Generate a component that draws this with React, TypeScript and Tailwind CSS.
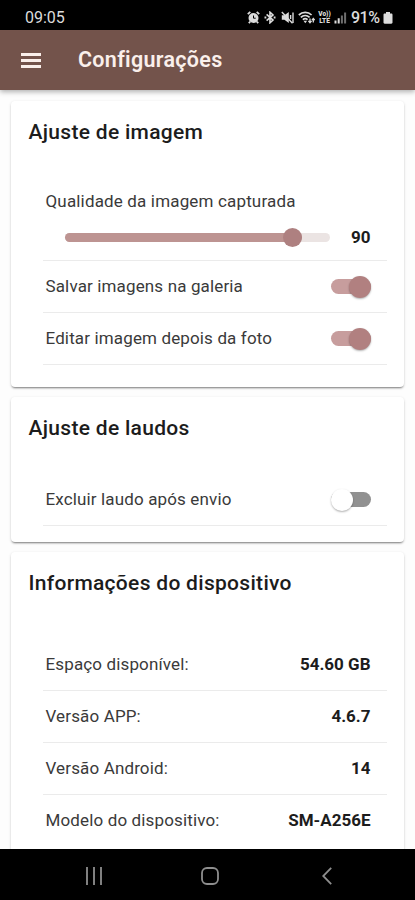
import type { ReactNode } from "react";

const DEVICE_INFO = [
  { label: "Espaço disponível:", value: "54.60 GB" },
  { label: "Versão APP:", value: "4.6.7" },
  { label: "Versão Android:", value: "14" },
  { label: "Modelo do dispositivo:", value: "SM-A256E" },
];

function StatusBar() {
  return (
    <div className="flex h-[30px] shrink-0 items-center bg-black pt-[5px] pr-[22px] pl-[25px] text-[#dcdcdc]">
      <span className="pt-px text-[16px] leading-none">09:05</span>
      <div className="ml-auto flex items-center">
        {/* alarm */}
        <svg width="13" height="13" viewBox="0 0 13 13" className="mr-[4px]" fill="none" stroke="currentColor">
          <circle cx="6.5" cy="7" r="5" fill="currentColor" stroke="none" />
          <path d="M.8 3.2 3.3 .9M12.2 3.2 9.7 .9M3.2 10.7 1.8 12.2M9.8 10.7 11.2 12.2" strokeWidth="1.8" />
          <path d="M6.5 4.5V7.2H8.7" stroke="#000" strokeWidth="1" />
        </svg>
        {/* bluetooth */}
        <svg width="12" height="13" viewBox="0 0 12 13" className="mr-[5px]" fill="none" stroke="currentColor" strokeWidth="1.6">
          <path d="M2.6 3.4 9 9.1 6 11.8V1.2L9 3.9 2.6 9.6" />
          <path d="M.5 6.5h1.8M9.7 6.5h1.8" strokeWidth="2" />
        </svg>
        {/* muted */}
        <svg width="13" height="13" viewBox="0 0 13 13" className="mr-[4px]" fill="none" stroke="currentColor">
          <path d="M.8 4.2h2.6L7.8 1v11L3.4 8.8H.8z" fill="currentColor" stroke="none" />
          <path d="M.8 1 11.5 12.2" strokeWidth="1.4" />
          <path d="M9.6 4v4M12 1.5v10.5" strokeWidth="1.4" />
        </svg>
        {/* wifi 6 */}
        <svg width="17" height="13" viewBox="0 0 17 13" className="mr-[3px]" fill="none" stroke="currentColor" strokeWidth="1.7">
          <path d="M.8 4C4.5.6 10 .6 13.6 4M2.8 6.4c2.6-2.3 6.2-2.3 8.8 0M4.8 8.6c1.5-1.2 3.3-1.2 4.8 0" />
          <path d="m5.5 9.8 1.8 2.4 1.8-2.4z" fill="currentColor" stroke="none" />
          <path d="M12 7.5v4M10.4 9.8 12 11.7l1.6-1.9M15.3 11.5v-4M13.9 9.2l1.4-1.7 1.4 1.7" strokeWidth="1.3" />
        </svg>
        <div className="mr-[3px] flex w-[13px] flex-col items-center text-[6.5px] leading-[7px] font-black">
          <span>Vo))</span>
          <span>LTE</span>
        </div>
        {/* signal */}
        <svg width="13" height="13" viewBox="0 0 13 13" className="mr-[4px]" fill="currentColor">
          <path d="M.5 9.5h2V12.5h-2zM3.7 7.3h2v5.2h-2z" />
          <path d="M6.9 4.5h2v8h-2zM10.1 1.5h2v11h-2z" opacity=".5" />
        </svg>
        <span className="w-[32px] pt-px text-[16px] leading-none font-medium tracking-[-0.5px]">91%</span>
        {/* battery */}
        <svg width="10" height="12" viewBox="0 0 10 12" fill="currentColor">
          <path d="M3 0h4v1.5h1.3c.7 0 1.2.5 1.2 1.2v7.8c0 .7-.5 1.2-1.2 1.2H1.7c-.7 0-1.2-.5-1.2-1.2V2.7c0-.7.5-1.2 1.2-1.2H3z" />
        </svg>
      </div>
    </div>
  );
}

function Header() {
  return (
    <header className="z-10 flex h-[60px] shrink-0 items-center bg-[#73534b] pl-[21px] text-[#faefeb] shadow-[0_2px_5px_rgba(0,0,0,0.3)]">
      <button className="flex w-5 flex-col gap-[3px]" aria-label="Menu">
        <span className="h-[3px] w-full bg-current" />
        <span className="h-[3px] w-full bg-current" />
        <span className="h-[3px] w-full bg-current" />
      </button>
      <h1 className="mt-px ml-[37px] text-[21.5px] font-semibold tracking-[0.3px]">Configurações</h1>
    </header>
  );
}

function Card({ title, className, children }: { title: string; className: string; children: ReactNode }) {
  return (
    <section
      className={`mx-[11px] shrink-0 rounded-[4px] bg-white px-[17.5px] pt-4 shadow-[0_2px_2px_-1px_rgba(0,0,0,0.42),0_1px_3px_rgba(0,0,0,0.16)] ${className}`}
    >
      <h2 className="text-[21px] leading-[30px] font-medium tracking-[0.3px] text-[#1c1c1c]">{title}</h2>
      {children}
    </section>
  );
}

function Row({ label, children }: { label: string; children: ReactNode }) {
  return (
    <div className="flex h-[52px] items-center justify-between border-b border-[#ebebeb] pr-[16px] pl-[3px] last:border-transparent">
      <span className="pt-px text-[17px] tracking-[0.14px] text-[#3a3a3a]">{label}</span>
      {children}
    </div>
  );
}

function Toggle({ on }: { on: boolean }) {
  return (
    <div className={`flex h-[15px] w-10 items-center rounded-full ${on ? "justify-end bg-[#c79d9d]" : "bg-[#919191]"}`}>
      <span
        className={`size-[22px] shrink-0 rounded-full shadow-[0_1px_2px_rgba(0,0,0,0.3)] ${on ? "bg-[#b18080]" : "bg-white"}`}
      />
    </div>
  );
}

export default function App() {
  return (
    <div className="flex h-[900px] w-[415px] flex-col overflow-hidden bg-[#fdfdfd] font-[Roboto,sans-serif]">
      <StatusBar />
      <Header />
      <main className="flex min-h-0 flex-1 flex-col gap-[10px] overflow-hidden pt-[11px]">
        <Card title="Ajuste de imagem" className="h-[286px]">
          <div className="mt-[42px] ml-[14px]">
            <div className="h-[72px] border-b border-[#ebebeb] pr-[16px] pl-[3px]">
              <p className="text-[17px] leading-[25px] tracking-[0.16px] text-[#3a3a3a]">Qualidade da imagem capturada</p>
              <div className="mt-[10px] flex h-[26px] items-center justify-between pl-[19px]">
                <div className="flex h-[9px] w-[265px] items-center rounded-full bg-[#ebe4e3]">
                  <div className="flex h-full w-[237px] items-center justify-end rounded-full bg-[#bd9492]">
                    <span className="size-[19px] shrink-0 rounded-full bg-[#ae8080]" />
                  </div>
                </div>
                <span className="pt-px text-[17px] font-bold text-[#1c1c1c]">90</span>
              </div>
            </div>
            <Row label="Salvar imagens na galeria">
              <Toggle on />
            </Row>
            <Row label="Editar imagem depois da foto">
              <Toggle on />
            </Row>
            <div className="-mt-px h-px bg-[#ebebeb]" />
          </div>
        </Card>
        <Card title="Ajuste de laudos" className="h-[145px]">
          <div className="mt-[31px] ml-[14px]">
            <Row label="Excluir laudo após envio">
              <Toggle on={false} />
            </Row>
            <div className="-mt-px h-px bg-[#ebebeb]" />
          </div>
        </Card>
        <Card title="Informações do dispositivo" className="h-[340px]">
          <div className="mt-[41px] ml-[14px]">
            {DEVICE_INFO.map(item => (
              <Row key={item.label} label={item.label}>
                <span className="pt-px text-[17px] font-bold text-[#1c1c1c]">{item.value}</span>
              </Row>
            ))}
          </div>
        </Card>
      </main>
      <nav className="flex h-[51px] shrink-0 items-center bg-black pt-[2px] pl-[85px] text-[#8e8e8e]">
        <svg width="18" height="18" viewBox="0 0 18 18" fill="none" stroke="currentColor" strokeWidth="1.8">
          <path d="M2 0v18M9 0v18M16 0v18" />
        </svg>
        <svg width="18" height="18" viewBox="0 0 18 18" className="ml-[98px]" fill="none" stroke="currentColor" strokeWidth="1.8">
          <rect x="1" y="1" width="16" height="16" rx="5" />
        </svg>
        <svg width="10" height="18" viewBox="0 0 10 18" className="ml-[103px]" fill="none" stroke="currentColor" strokeWidth="1.8">
          <path d="M9.2.8 1.2 9l8 8.2" />
        </svg>
      </nav>
    </div>
  );
}
